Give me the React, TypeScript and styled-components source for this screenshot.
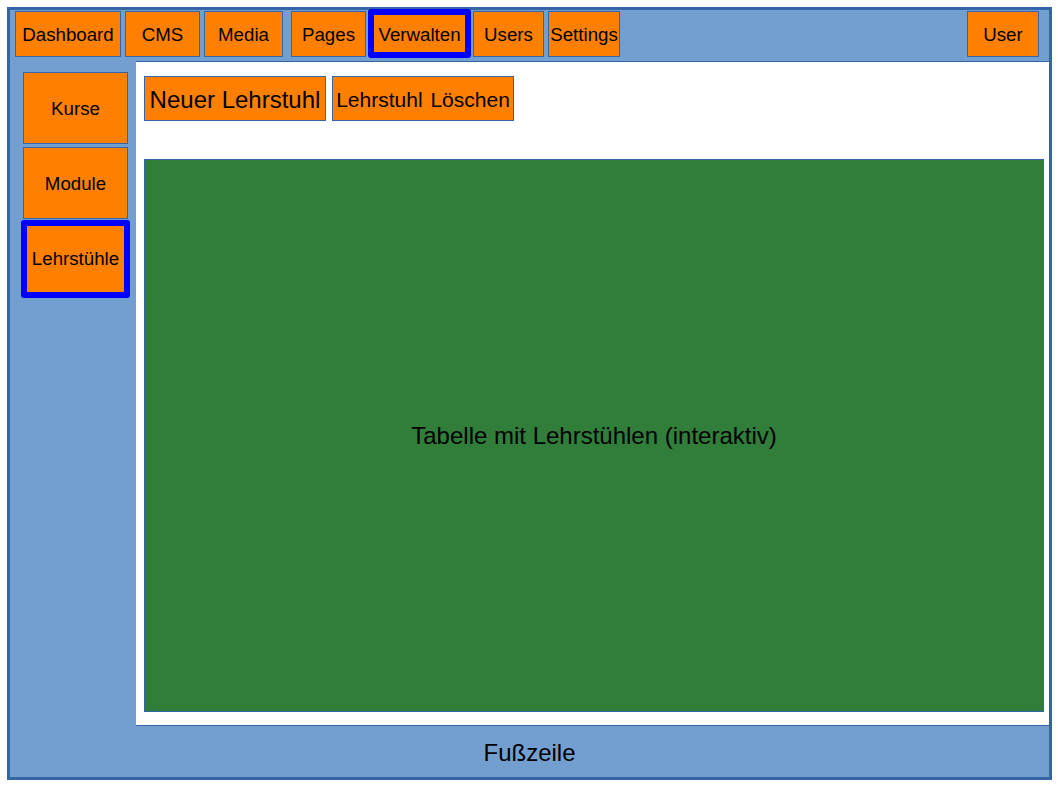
import styled, { createGlobalStyle } from 'styled-components';

const GlobalStyle = createGlobalStyle`
  html, body {
    margin: 0;
    padding: 0;
    background: #ffffff;
    font-family: "Liberation Sans", Arial, sans-serif;
  }
  #root {
    padding: 7px;
  }
`;

const topNav = [
  { label: 'Dashboard', width: 106 },
  { label: 'CMS', width: 75 },
  { label: 'Media', width: 79 },
  { label: 'Pages', width: 75, gapBefore: 8 },
  { label: 'Verwalten', width: 99, active: true },
  { label: 'Users', width: 71 },
  { label: 'Settings', width: 72 },
];

const sideNav = [
  { label: 'Kurse' },
  { label: 'Module' },
  { label: 'Lehrstühle', active: true },
];

const App = () => {
  return (
    <>
      <GlobalStyle />
      <Frame>
        <Header>
          <NavGroup>
            {topNav.map((item, i) => (
              <NavButton
                key={item.label}
                $width={item.width}
                $gap={i === 0 ? 0 : item.gapBefore ?? 4}
                $active={item.active}
              >
                {item.label}
              </NavButton>
            ))}
          </NavGroup>
          <NavButton $width={72} $gap={0}>
            User
          </NavButton>
        </Header>
        <Sidebar>
          {sideNav.map((item) => (
            <SideButton key={item.label} $active={item.active}>
              {item.label}
            </SideButton>
          ))}
        </Sidebar>
        <Content>
          <Toolbar>
            <ActionButton $size={24}>Neuer Lehrstuhl</ActionButton>
            <ActionButton $size={21} $wordSpacing={2}>
              Lehrstuhl Löschen
            </ActionButton>
          </Toolbar>
          <Table>Tabelle mit Lehrstühlen (interaktiv)</Table>
        </Content>
        <Footer>Fußzeile</Footer>
      </Frame>
    </>
  );
};

export default App;

const Frame = styled.div`
  box-sizing: border-box;
  width: 1045px;
  height: 773px;
  background: #729fcf;
  border: 3px solid #3465a4;
  display: grid;
  grid-template-columns: 126px 1fr;
  grid-template-rows: 51px 1fr 51px;
`;

const Header = styled.div`
  grid-column: 1 / 3;
  display: flex;
  justify-content: space-between;
  align-items: flex-start;
  padding: 1px 10px 0 5px;
`;

const NavGroup = styled.div`
  display: flex;
`;

const NavButton = styled.div<{ $width: number; $gap: number; $active?: boolean }>`
  position: relative;
  box-sizing: border-box;
  width: ${(p) => p.$width}px;
  height: 46px;
  margin-left: ${(p) => p.$gap}px;
  padding-top: 1px;
  background: #ff8000;
  border: 1px solid #3465a4;
  display: flex;
  align-items: center;
  justify-content: center;
  font-size: 18.7px;
  color: #000;
  white-space: nowrap;

  ${(p) =>
    p.$active &&
    `
    &::after {
      content: '';
      position: absolute;
      inset: -3px -3px -2px -3px;
      border: 6px solid #0000ff;
      border-radius: 3px;
    }
  `}
`;

const Sidebar = styled.div`
  display: flex;
  flex-direction: column;
  gap: 3px;
  padding: 11px 0 0 13px;
`;

const SideButton = styled.div<{ $active?: boolean }>`
  position: relative;
  box-sizing: border-box;
  width: 105px;
  height: 72px;
  padding-top: 1px;
  background: #ff8000;
  border: 1px solid #3465a4;
  display: flex;
  align-items: center;
  justify-content: center;
  font-size: 18.7px;
  color: #000;

  ${(p) =>
    p.$active &&
    `
    &::after {
      content: '';
      position: absolute;
      inset: -3px -3px -5px -3px;
      border: 6px solid #0000ff;
      border-radius: 3px;
    }
  `}
`;

const Content = styled.div`
  background: #ffffff;
  border-top: 1px solid #3465a4;
  border-bottom: 1px solid #3465a4;
  display: flex;
  flex-direction: column;
  padding: 14px 5px 13px 8px;
`;

const Toolbar = styled.div`
  display: flex;
  gap: 6px;
  margin-bottom: 38px;
`;

const ActionButton = styled.div<{ $size: number; $wordSpacing?: number }>`
  box-sizing: border-box;
  width: 182px;
  height: 45px;
  padding-top: 3px;
  background: #ff8000;
  border: 1px solid #3465a4;
  display: flex;
  align-items: center;
  justify-content: center;
  font-size: ${(p) => p.$size}px;
  word-spacing: ${(p) => p.$wordSpacing ?? 0}px;
  color: #000;
  white-space: nowrap;
`;

const Table = styled.div`
  flex: 1;
  background: #317d3a;
  border: 1px solid #3465a4;
  display: flex;
  align-items: center;
  justify-content: center;
  font-size: 24px;
  color: #000;
`;

const Footer = styled.div`
  grid-column: 1 / 3;
  display: flex;
  align-items: center;
  justify-content: center;
  padding-top: 3px;
  font-size: 24px;
  color: #000;
`;
